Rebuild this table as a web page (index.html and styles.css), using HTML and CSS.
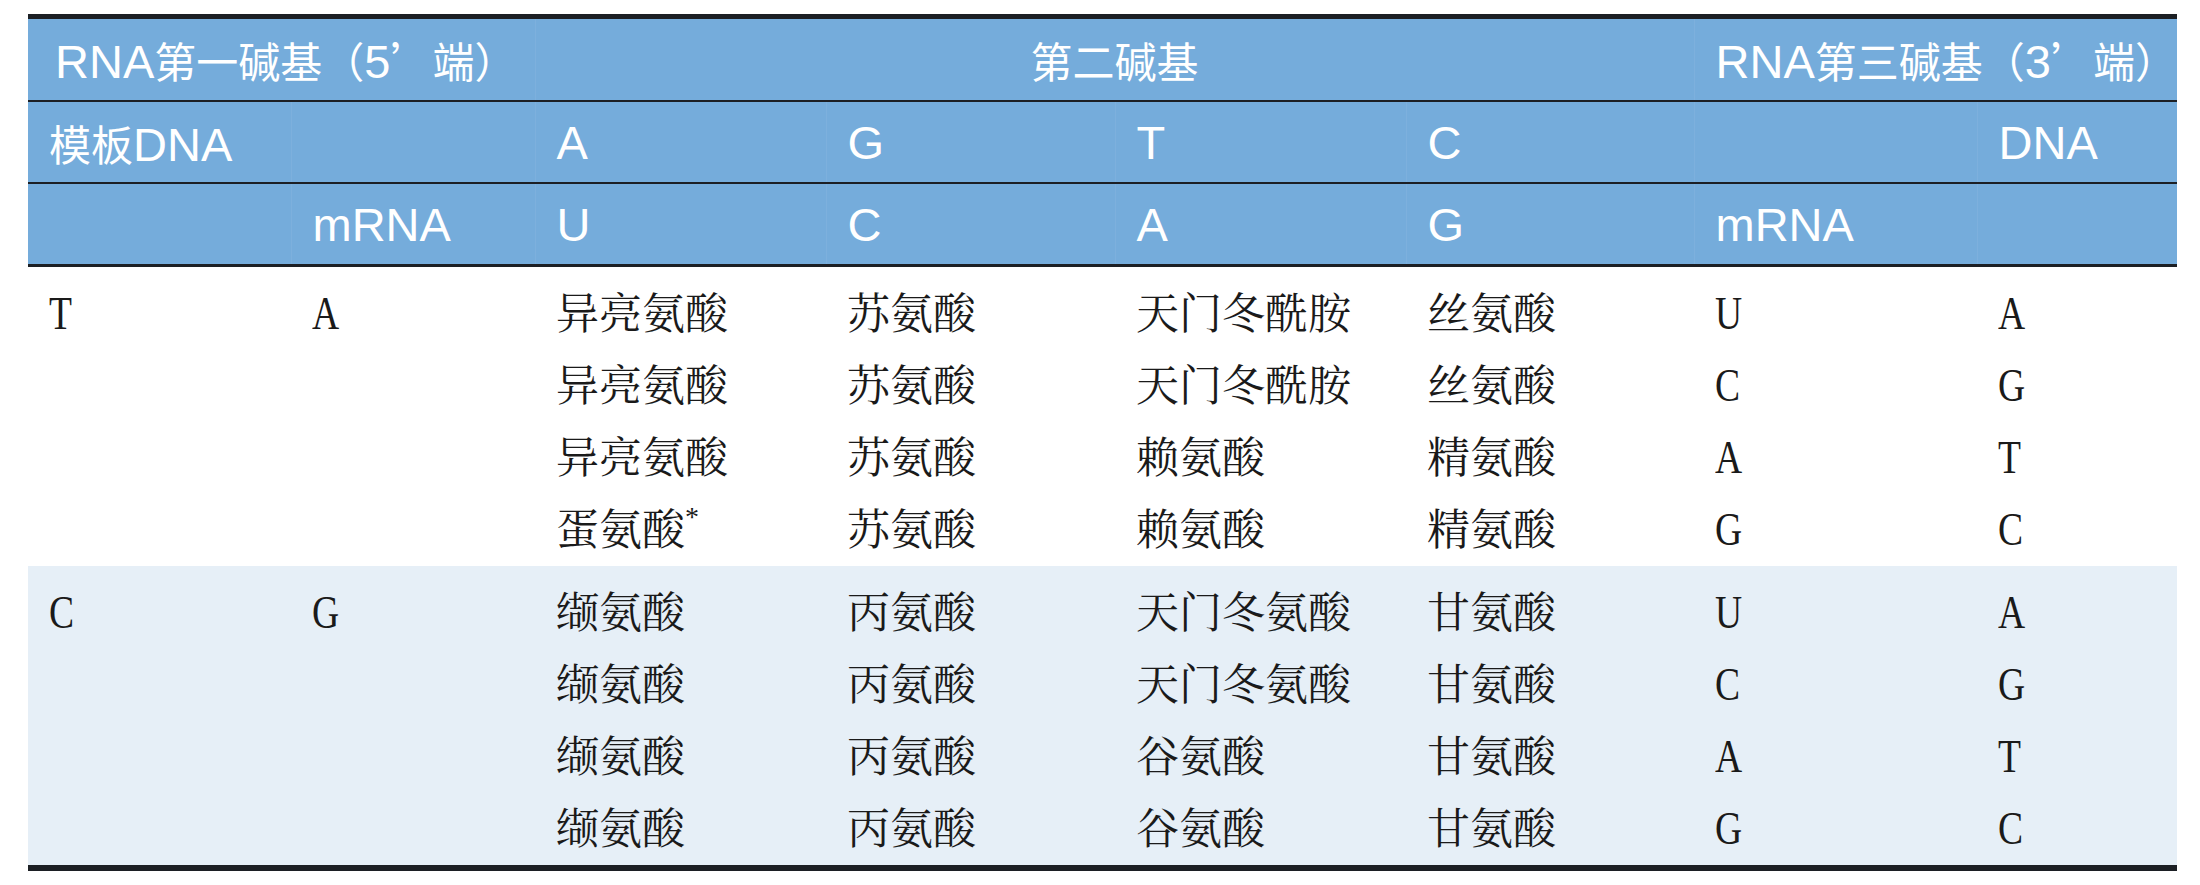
FILE: index.html
```html
<!DOCTYPE html>
<html lang="zh-CN">
<head>
<meta charset="utf-8">
<title>密码子表</title>
<link rel="stylesheet" href="styles.css">
</head>
<body>
<table class="codon">
  <colgroup>
    <col class="c1"><col class="c2"><col class="c3"><col class="c4">
    <col class="c5"><col class="c6"><col class="c7"><col class="c8">
  </colgroup>
  <thead>
    <tr class="h1">
      <th colspan="2" class="first">RNA<span class="zh">第一碱基（</span>5<span class="zh">’端）</span></th>
      <th colspan="4" class="center"><span class="zh">第二碱基</span></th>
      <th colspan="2">RNA<span class="zh">第三碱基（</span>3<span class="zh">’端）</span></th>
    </tr>
    <tr class="h2">
      <th><span class="zh">模板</span>DNA</th><th></th><th>A</th><th>G</th><th>T</th><th>C</th><th></th><th>DNA</th>
    </tr>
    <tr class="h3">
      <th></th><th>mRNA</th><th>U</th><th>C</th><th>A</th><th>G</th><th>mRNA</th><th></th>
    </tr>
  </thead>
  <tbody class="g1">
    <tr><td><span class="lat">T</span></td><td><span class="lat">A</span></td><td>异亮氨酸</td><td>苏氨酸</td><td>天门冬酰胺</td><td>丝氨酸</td><td><span class="lat">U</span></td><td><span class="lat">A</span></td></tr>
    <tr><td></td><td></td><td>异亮氨酸</td><td>苏氨酸</td><td>天门冬酰胺</td><td>丝氨酸</td><td><span class="lat">C</span></td><td><span class="lat">G</span></td></tr>
    <tr><td></td><td></td><td>异亮氨酸</td><td>苏氨酸</td><td>赖氨酸</td><td>精氨酸</td><td><span class="lat">A</span></td><td><span class="lat">T</span></td></tr>
    <tr><td></td><td></td><td>蛋氨酸<sup class="star">*</sup></td><td>苏氨酸</td><td>赖氨酸</td><td>精氨酸</td><td><span class="lat">G</span></td><td><span class="lat">C</span></td></tr>
  </tbody>
  <tbody class="g2">
    <tr><td><span class="lat">C</span></td><td><span class="lat">G</span></td><td>缬氨酸</td><td>丙氨酸</td><td>天门冬氨酸</td><td>甘氨酸</td><td><span class="lat">U</span></td><td><span class="lat">A</span></td></tr>
    <tr><td></td><td></td><td>缬氨酸</td><td>丙氨酸</td><td>天门冬氨酸</td><td>甘氨酸</td><td><span class="lat">C</span></td><td><span class="lat">G</span></td></tr>
    <tr><td></td><td></td><td>缬氨酸</td><td>丙氨酸</td><td>谷氨酸</td><td>甘氨酸</td><td><span class="lat">A</span></td><td><span class="lat">T</span></td></tr>
    <tr><td></td><td></td><td>缬氨酸</td><td>丙氨酸</td><td>谷氨酸</td><td>甘氨酸</td><td><span class="lat">G</span></td><td><span class="lat">C</span></td></tr>
  </tbody>
</table>
</body>
</html>
```

FILE: styles.css
```css
html, body {
  margin: 0;
  padding: 0;
  background: #ffffff;
}
body {
  padding: 14px 0 0 28px;
}
.codon {
  border-collapse: collapse;
  table-layout: fixed;
  width: 2149px;
  border-top: 5px solid #1c1f24;
  border-bottom: 6px solid #1c1f24;
}
.c1 { width: 263px; }
.c2 { width: 244px; }
.c3 { width: 291px; }
.c4 { width: 289px; }
.c5 { width: 291px; }
.c6 { width: 288px; }
.c7 { width: 283px; }
.c8 { width: 200px; }

.codon thead th {
  background: #75acdb;
  color: #ffffff;
  font-family: "Liberation Sans", "Noto Sans CJK SC", sans-serif;
  font-weight: 400;
  font-size: 47px;
  text-align: left;
  padding: 0 0 0 21px;
  height: 80px;
  white-space: nowrap;
  border-left: 1px solid rgba(255, 255, 255, 0.06);
}
.codon thead th .zh {
  font-family: "Noto Sans CJK SC", sans-serif;
  font-size: 42px;
}
.codon thead th:first-child { border-left: none; }
.codon thead tr.h1 th { height: 81px; }
.codon thead tr.h1 th.first { padding-left: 27px; }
.codon thead tr.h1 th.center { text-align: center; padding-left: 0; }
.codon thead tr.h2 th { border-top: 2px solid #1c1f24; }
.codon thead tr.h3 th { border-top: 2px solid #1c1f24; border-bottom: 3px solid #1c1f24; }

.codon tbody td {
  font-family: "Noto Serif CJK SC", "Liberation Serif", "Noto Sans CJK SC", serif;
  font-size: 43px;
  color: #1a1a1a;
  padding: 0 0 0 21px;
  height: 72px;
  line-height: 72px;
  white-space: nowrap;
  vertical-align: middle;
}
.codon tbody .lat {
  display: inline-block;
  font-family: "Liberation Serif", serif;
  font-size: 47px;
  line-height: 1;
  transform: scaleX(0.8);
  transform-origin: left center;
}
.codon tbody tr:first-child td { padding-top: 8px; }
.codon tbody tr:last-child td { padding-bottom: 3px; }
.codon tbody.g2 td { background: #e6eff7; }
.star {
  font-family: "Liberation Serif", serif;
  font-size: 28px;
  vertical-align: top;
  line-height: 1;
  position: relative;
  top: 12px;
}
```
